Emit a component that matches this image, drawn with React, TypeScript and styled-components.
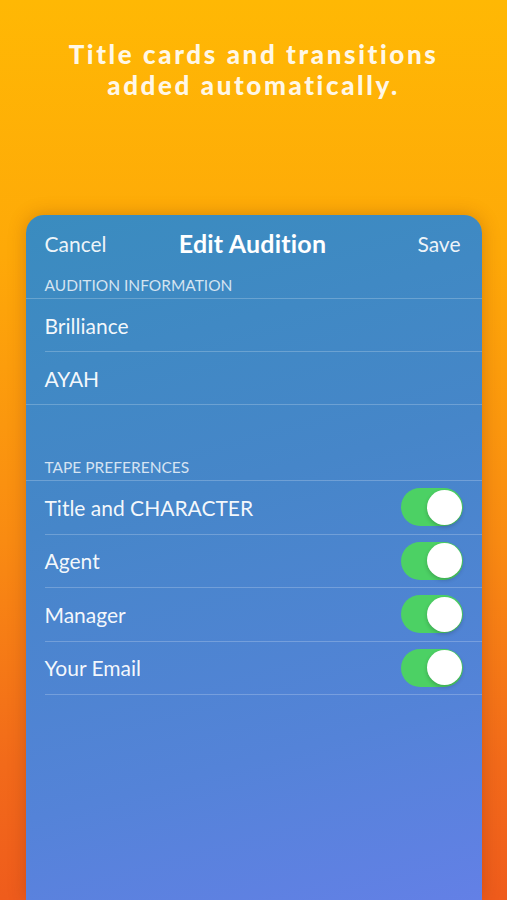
import styled, { createGlobalStyle } from "styled-components";

const GlobalStyle = createGlobalStyle`
  html, body {
    margin: 0;
    padding: 0;
  }
  body {
    font-family: Lato, "Open Sans", sans-serif;
    -webkit-font-smoothing: antialiased;
  }
`;

const Screen = styled.div`
  width: 507px;
  height: 900px;
  overflow: hidden;
  background: linear-gradient(180deg, #ffb804 0%, #fea908 28%, #f98b12 60%, #f26a1a 85%, #ef5c1c 100%);
  display: flex;
  flex-direction: column;
  align-items: center;
`;

const Headline = styled.h1`
  margin: 39px 0 0;
  color: rgba(255, 255, 255, 0.92);
  font-family: Lato, sans-serif;
  font-weight: 900;
  font-size: 26px;
  line-height: 31px;
  letter-spacing: 2.6px;
  text-align: center;
`;

const Card = styled.div`
  margin-top: 114px;
  width: 456px;
  flex: 1;
  border-radius: 18px 18px 0 0;
  background: linear-gradient(165deg, #3a8cbf 0%, #4686c9 40%, #5483d8 75%, #6380e6 100%);
  box-shadow: 0 0 18px rgba(120, 40, 0, 0.28);
  color: #fff;
`;

const NavBar = styled.div`
  height: 56px;
  padding: 0 21px 0 19px;
  display: flex;
  align-items: center;
  justify-content: space-between;
`;

const NavButton = styled.span<{ right?: boolean }>`
  font-size: 21px;
  color: rgba(255, 255, 255, 0.92);
  width: 80px;
  text-align: ${(p) => (p.right ? "right" : "left")};
`;

const NavTitle = styled.span`
  font-size: 25px;
  font-weight: 700;
  letter-spacing: 0.2px;
`;

const SectionHeader = styled.div<{ gapTop?: number }>`
  margin-top: ${(p) => p.gapTop ?? 0}px;
  height: 28px;
  box-sizing: border-box;
  padding: 0 19px;
  display: flex;
  align-items: center;
  font-size: 15.5px;
  color: rgba(255, 255, 255, 0.78);
  text-transform: uppercase;
  border-bottom: 1px solid rgba(255, 255, 255, 0.22);
`;

const Group = styled.div<{ flush?: boolean }>`
  border-bottom: ${(p) => (p.flush ? "1px solid rgba(255, 255, 255, 0.22)" : "none")};
`;

const Row = styled.div<{ last?: boolean; h: number }>`
  margin-left: 19px;
  height: ${(p) => p.h}px;
  box-sizing: border-box;
  padding-right: 19px;
  display: flex;
  align-items: center;
  justify-content: space-between;
  font-size: 21px;
  color: rgba(255, 255, 255, 0.95);
  border-bottom: ${(p) => (p.last ? "none" : "1px solid rgba(255, 255, 255, 0.22)")};
`;

const Switch = styled.div<{ on: boolean }>`
  width: 62px;
  height: 38px;
  border-radius: 19px;
  background: ${(p) => (p.on ? "#4cd164" : "rgba(255,255,255,0.3)")};
  display: flex;
  align-items: center;
  justify-content: ${(p) => (p.on ? "flex-end" : "flex-start")};
  padding: 0 1px;
  box-sizing: border-box;
`;

const Knob = styled.div`
  width: 35px;
  height: 35px;
  border-radius: 50%;
  background: #fff;
  box-shadow: 0 2px 4px rgba(0, 0, 0, 0.2);
`;

const infoRows = ["Brilliance", "AYAH"];
const prefs = ["Title and CHARACTER", "Agent", "Manager", "Your Email"];

export default function App() {
  return (
    <Screen>
      <GlobalStyle />
      <Headline>
        Title cards and transitions
        <br />
        added automatically.
      </Headline>
      <Card>
        <NavBar>
          <NavButton>Cancel</NavButton>
          <NavTitle>Edit Audition</NavTitle>
          <NavButton right>Save</NavButton>
        </NavBar>
        <SectionHeader>Audition Information</SectionHeader>
        <Group flush>
          {infoRows.map((r, i) => (
            <Row key={r} h={i === infoRows.length - 1 ? 52 : 53} last={i === infoRows.length - 1}>
              {r}
            </Row>
          ))}
        </Group>
        <SectionHeader gapTop={48}>Tape Preferences</SectionHeader>
        <Group>
          {prefs.map((p) => (
            <Row key={p} h={53.5}>
              {p}
              <Switch on>
                <Knob />
              </Switch>
            </Row>
          ))}
        </Group>
      </Card>
    </Screen>
  );
}
